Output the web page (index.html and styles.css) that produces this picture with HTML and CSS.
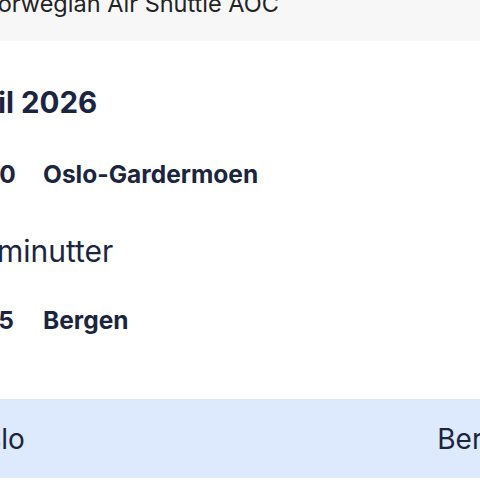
FILE: index.html
```html
<!DOCTYPE html>
<html lang="no">
<head>
<meta charset="utf-8">
<link rel="stylesheet" href="styles.css">
</head>
<body>
<div class="page">
  <div class="operator"><span class="operator-text">Norwegian Air Shuttle AOC</span></div>
  <section class="trip">
    <h1 class="date">april 2026</h1>
    <div class="stop">
      <span class="time">07:00</span>
      <span class="place">Oslo-Gardermoen</span>
    </div>
    <div class="duration">55 minutter</div>
    <div class="stop">
      <span class="time">07:55</span>
      <span class="place">Bergen</span>
    </div>
  </section>
  <div class="route">
    <span class="route-from">Oslo</span>
    <span class="route-to">Bergen</span>
  </div>
</div>
</body>
</html>
```
FILE: styles.css
```css
html, body {
  margin: 0;
  padding: 0;
  background: #ffffff;
  overflow: hidden;
}
body {
  width: 480px;
  height: 480px;
  font-family: "Inter", "Liberation Sans", sans-serif;
  color: #1b2540;
}
.page {
  width: 620px;
  margin-left: -50px;
}
.operator {
  box-sizing: border-box;
  background: #f7f7f7;
  height: 63px;
  margin-top: -22px;
  padding-top: 8px;
  font-size: 23.5px;
  line-height: 36px;
  color: #232323;
}
.operator-text {
  display: block;
  margin-left: 30px;
}
.date {
  margin: 0;
  font-size: 29.5px;
  font-weight: 700;
  line-height: 40px;
  padding-top: 41px;
}
.stop {
  display: flex;
  align-items: baseline;
  font-size: 24.5px;
  font-weight: 700;
  line-height: 30px;
  margin-top: 37px;
}
.time {
  width: 98px;
  flex: none;
  margin-left: -5px;
}
.duration {
  font-size: 30px;
  line-height: 36px;
  margin-top: 44px;
  padding-left: 2px;
}
.stop + .duration + .stop {
  margin-top: 36px;
}
.route {
  margin-top: 64px;
  background: #dde9fc;
  height: 79px;
  display: flex;
  justify-content: space-between;
  align-items: center;
  font-size: 28px;
  padding-left: 15px;
}
.route-to {
  margin-right: 38px;
}
```
